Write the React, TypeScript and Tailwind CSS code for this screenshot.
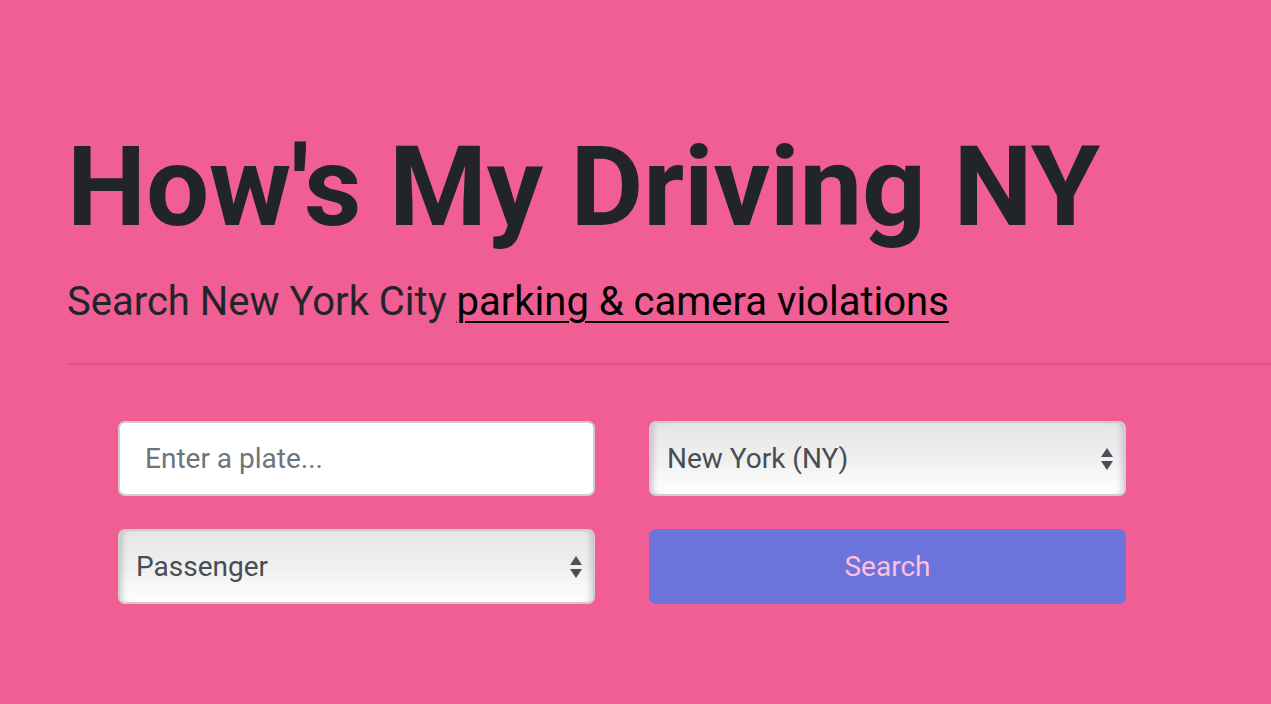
import React from "react";

function Arrows() {
  return (
    <svg width="14" height="26" viewBox="0 0 14 26" className="absolute right-[10px] top-1/2 -translate-y-1/2">
      <path d="M7 2 L13 11 L1 11 Z" fill="#494f56" />
      <path d="M1 15 L13 15 L7 24 Z" fill="#494f56" />
    </svg>
  );
}

function FakeSelect({ label }: { label: string }) {
  return (
    <div className="relative h-[75px] rounded-[7px] border-2 border-[#d0ccd0] bg-gradient-to-b from-[#e6e6e6] via-[#efefef] to-[#ffffff] shadow-[inset_6px_0_6px_-4px_rgba(0,0,0,0.18),inset_-6px_0_6px_-4px_rgba(0,0,0,0.18)] flex items-center pl-[16px]">
      <span className="text-[28px] text-[#474d54] leading-none">{label}</span>
      <Arrows />
    </div>
  );
}

export default function App() {
  return (
    <div className="min-h-[704px] w-full bg-[#f05e93] overflow-hidden" style={{ fontFamily: "Roboto, 'Liberation Sans', sans-serif" }}>
      <div className="pl-[67px] pt-[131px]">
        <h1 className="text-[112px] font-bold leading-none text-[#212529] tracking-[-0.2px] whitespace-nowrap">
          How's My Driving NY
        </h1>
        <p className="mt-[39px] text-[40px] leading-none text-[#212529] whitespace-nowrap">
          Search New York City{" "}
          <a href="#" className="text-black underline decoration-[2px] underline-offset-[6px]">
            parking &amp; camera violations
          </a>
        </p>
        <div className="mt-[41px] h-[2px] bg-[rgba(0,0,0,0.1)]" />
        <div className="mt-[56px] ml-[51px] w-[1008px] grid grid-cols-2 gap-x-[54px] gap-y-[33px]">
          <div className="h-[75px] rounded-[7px] border-2 border-[#d0ccd0] bg-white flex items-center pl-[25px]">
            <span className="text-[28px] text-[#6c757d] leading-none">Enter a plate...</span>
          </div>
          <FakeSelect label="New York (NY)" />
          <FakeSelect label="Passenger" />
          <button className="h-[75px] rounded-[7px] bg-[#6c74db] text-[#ffbfe0] text-[28px] leading-none">
            Search
          </button>
        </div>
      </div>
    </div>
  );
}
